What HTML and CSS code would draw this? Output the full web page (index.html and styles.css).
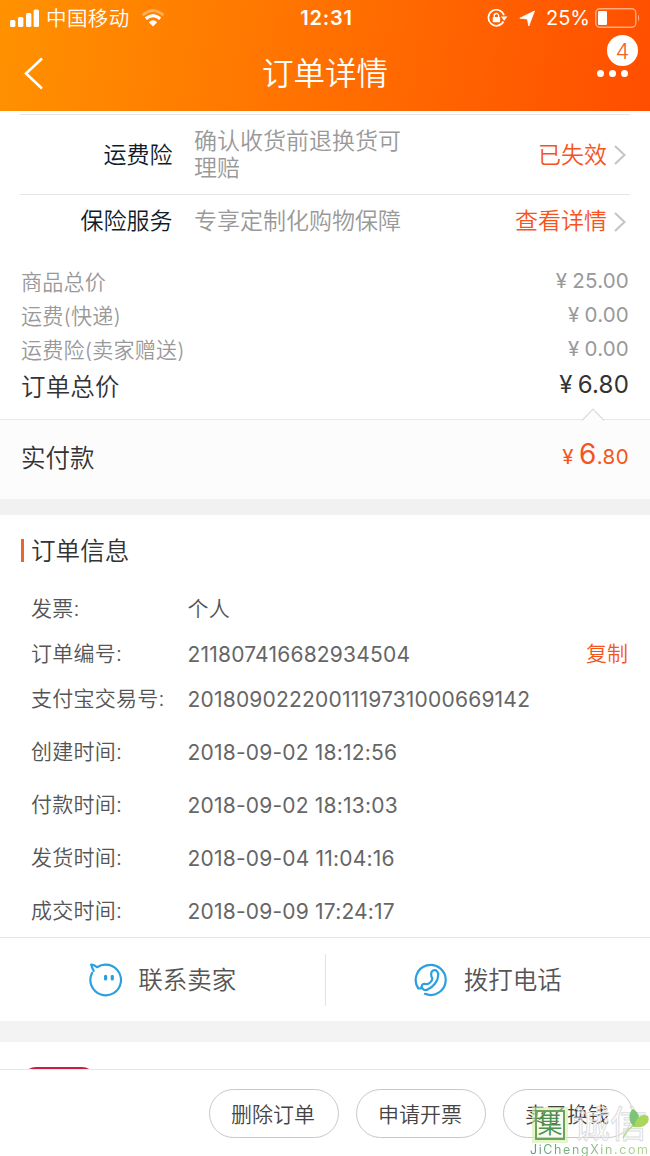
FILE: index.html
```html
<!DOCTYPE html>
<html lang="zh-CN">
<head>
  <meta charset="utf-8">
  <title>订单详情</title>
  <link rel="stylesheet" href="styles.css">
</head>
<body>
<!-- 头部 -->
<header class="header">
  <div class="status-bar">
    <div class="status-left">
      <svg class="signal" width="29" height="18" viewBox="0 0 29 18" fill="#fff">
        <rect x="0" y="11" width="5.4" height="7" rx="1.6"/>
        <rect x="8" y="8" width="5.4" height="10" rx="1.6"/>
        <rect x="16" y="4" width="5.4" height="14" rx="1.6"/>
        <rect x="23.6" y="0.5" width="5.4" height="17.5" rx="1.6"/>
      </svg>
      <span class="carrier">中国移动</span>
      <svg class="wifi" width="24" height="18" viewBox="0 0 24 18" fill="none" stroke="#fff">
        <path d="M1.5 6.2Q12-3 22.5 6.2" stroke-width="2.6" opacity=".35"/>
        <path d="M4.8 9.8Q12 3.5 19.2 9.8" stroke-width="3.2"/>
        <path d="M7.8 13.2Q12 9.5 16.2 13.2L12 17.5Z" fill="#fff" stroke="none"/>
      </svg>
    </div>
    <div class="clock">12:31</div>
    <div class="status-right">
      <svg class="lock" width="21" height="18" viewBox="0 0 21 18" fill="none" stroke="#fff">
        <path d="M16.5 12.5A8 8 0 1 1 17 6.2" stroke-width="1.7"/>
        <path d="M13.8 7.5H20.4L17.2 11.8Z" fill="#fff" stroke="none"/>
        <path d="M7.2 8.5V6.7a2.2 2.2 0 0 1 4.4 0V8.5" stroke-width="1.3"/>
        <rect x="5.7" y="8" width="7.4" height="5.3" rx=".8" fill="#fff" stroke="none"/>
      </svg>
      <svg class="locate" width="16" height="17" viewBox="0 0 16 17" fill="#fff"><path d="M15.5 1L9.8 16L8.4 9L.8 8.2Z" stroke="#fff" stroke-width=".8"/></svg>
      <span class="percent">25%</span>
      <svg class="battery" width="46" height="20" viewBox="0 0 46 20" fill="none">
        <rect x=".8" y=".8" width="40" height="18.4" rx="4" stroke="#fff" stroke-opacity=".5" stroke-width="1.4"/>
        <rect x="3" y="3" width="9" height="14" rx="1" fill="#fff"/>
        <path d="M43 6.5q2.5 3.5 0 7z" fill="#fff" fill-opacity=".5"/>
      </svg>
    </div>
  </div>
  <div class="nav-bar">
    <svg class="back" width="22" height="34" viewBox="0 0 22 34" fill="none" stroke="#fff" stroke-width="2.6"><path d="M19 1.5L3 16.5L19 31.5"/></svg>
    <h1>订单详情</h1>
    <div class="more">
      <i></i><i></i><i></i>
      <span class="badge">4</span>
    </div>
  </div>
</header>

<main class="content">
  <!-- 保险 -->
  <section class="insurance">
    <div class="ins-row ins-first">
      <div class="ins-name">运费险</div>
      <div class="ins-desc">确认收货前退换货可理赔</div>
      <div class="ins-link">已失效</div>
      <svg class="arrow" width="12" height="20" viewBox="0 0 12 20" fill="none" stroke="#c4c4c4" stroke-width="2"><path d="M1 1L10.5 10L1 19"/></svg>
    </div>
    <div class="ins-row ins-second">
      <div class="ins-name">保险服务</div>
      <div class="ins-desc">专享定制化购物保障</div>
      <div class="ins-link">查看详情</div>
      <svg class="arrow" width="12" height="20" viewBox="0 0 12 20" fill="none" stroke="#c4c4c4" stroke-width="2"><path d="M1 1L10.5 10L1 19"/></svg>
    </div>
  </section>

  <!-- 价格 -->
  <section class="price">
    <div class="price-row"><span>商品总价</span><span class="num"><em>¥</em>25.00</span></div>
    <div class="price-row"><span>运费(快递)</span><span class="num"><em>¥</em>0.00</span></div>
    <div class="price-row"><span>运费险(卖家赠送)</span><span class="num"><em>¥</em>0.00</span></div>
    <div class="price-row total"><span>订单总价</span><span class="num"><em>¥</em>6.80</span></div>
  </section>
  <section class="paid">
    <svg class="notch" width="24" height="13" viewBox="0 0 24 13" fill="#fcfcfc" stroke="#dcdcdc" stroke-width="1.2"><path d="M1 12.5L12 1L23 12.5"/></svg>
    <span>实付款</span>
    <span class="pay-num"><em>¥</em><b>6</b>.80</span>
  </section>

  <!-- 订单信息 -->
  <section class="order">
    <h2>订单信息</h2>
    <div class="order-row"><span class="label">发票:</span><span class="value text">个人</span></div>
    <div class="order-row"><span class="label">订单编号:</span><span class="value">211807416682934504</span><a class="copy">复制</a></div>
    <div class="order-row"><span class="label">支付宝交易号:</span><span class="value">2018090222001119731000669142</span></div>
    <div class="order-times">
      <div class="order-row"><span class="label">创建时间:</span><span class="value">2018-09-02 18:12:56</span></div>
      <div class="order-row"><span class="label">付款时间:</span><span class="value">2018-09-02 18:13:03</span></div>
      <div class="order-row"><span class="label">发货时间:</span><span class="value">2018-09-04 11:04:16</span></div>
      <div class="order-row"><span class="label">成交时间:</span><span class="value">2018-09-09 17:24:17</span></div>
    </div>
  </section>

  <!-- 联系 -->
  <section class="contact">
    <div class="contact-item">
      <svg width="34" height="34" viewBox="0 0 34 34" fill="none" stroke="#2b9fe0" stroke-width="2.2" stroke-linecap="round" stroke-linejoin="round">
        <path d="M5.6 7.8Q4 5 3.2 1.5Q6 1.7 9 4.2Q13 1.7 17.5 1.7A15.3 15.3 0 1 1 4.2 9.8"/>
        <path d="M17.6 13.3v2.6M24.3 13.3v2.6" stroke-width="3.2"/>
      </svg>
      <span>联系卖家</span>
    </div>
    <div class="contact-item">
      <svg width="34" height="34" viewBox="0 0 34 34" fill="none" stroke="#2b9fe0" stroke-width="2.2" stroke-linecap="round" stroke-linejoin="round">
        <path d="M4.2 25.2A15 15 0 1 1 11 30.8"/>
        <path d="M4.2 25.2C6.500 26 7.500 25.200 7.600 23.500C8 21 10 20.300 12.300 21.200C14.800 21.500 18.200 18.300 18.400 15.700C17 13 16.200 9 19 7.600C22 6.200 24.500 8.500 24.200 12.500C24 18.500 19 24 14 26.300C11 28 8 26.500 7.600 23.500"/>
      </svg>
      <span>拨打电话</span>
    </div>
  </section>

  <section class="card"><div class="card-logo"></div></section>
</main>

<!-- 底部按钮 -->
<footer class="footer">
  <button>删除订单</button>
  <button>申请开票</button>
  <button>卖了换钱</button>
  <div class="watermark">
    <div class="wm-top">
      <span class="wm-seal">集</span>
      <span class="wm-name">诚信</span>
      <svg class="wm-leaf" width="28" height="30" viewBox="0 0 28 30">
        <path d="M1 29Q6 18 14 16" fill="none" stroke="#b9d98e" stroke-width="1.5"/>
        <path d="M12 18C5 11 7 3 11 0C17 4 19 8 15 18Z" fill="#7cc576"/>
        <path d="M12 18C14 8 20 4 26 7C29 13 22 20 12 18Z" fill="#a9d65c"/>
      </svg>
    </div>
    <div class="wm-url">JiChengXin.com</div>
  </div>
</footer>
</body>
</html>
```
FILE: styles.css
```css
/* 基本样式 */
* { box-sizing: border-box; }
body { margin: 0; height: 1156px; display: flex; flex-direction: column; overflow: hidden; background: #fff; color: #333; font-family: Inter, "Noto Sans CJK SC", sans-serif; font-weight: 350; }
h1, h2 { margin: 0; font-weight: inherit; }
em, i { font-style: normal; }
svg { display: block; flex: none; }

/* 头部 */
.header { height: 111px; flex: none; background: linear-gradient(100deg, #ff9200 0%, #ff7000 50%, #ff4e00 100%); color: #fff; }
.status-bar { height: 36px; display: grid; grid-template-columns: 1fr auto 1fr; align-items: center; padding: 0 10px; }
.status-left, .status-right { display: flex; align-items: center; }
.status-right { justify-content: flex-end; margin-right: -1px; }
.carrier { font-size: 20.5px; margin: -2px 0 0 7px; letter-spacing: .4px; }
.wifi { margin-left: 11px; }
.clock { font-size: 20px; font-weight: 600; letter-spacing: .8px; margin: -1px 0 0 3px; }
.locate { margin-left: 11px; }
.percent { font-size: 20px; font-weight: 400; margin: 0 5px 0 11px; }
.nav-bar { height: 75px; display: flex; justify-content: space-between; align-items: center; padding: 0 22px 0 23px; }
.nav-bar h1 { font-size: 31.5px; line-height: 40px; margin: 0 0 0 8px; }
.more { position: relative; display: flex; gap: 5px; width: 31px; }
.more i { width: 7px; height: 7px; border-radius: 50%; background: #fff; }
.badge { position: absolute; left: 10px; top: -35px; width: 31px; height: 31px; border-radius: 50%; background: #fff; color: #f0622a; font-size: 22px; line-height: 32px; text-align: center; }

/* 保险 */
.content { flex: 1; min-height: 0; overflow: hidden; }
.insurance { padding: 3px 20px 0; height: 155px; }
.ins-row { display: flex; align-items: center; border-top: 1px solid #e6e6e6; font-size: 23px; line-height: 27px; }
.ins-first { height: 80px; padding-top: 1px; }
.ins-second { height: 54px; }
.ins-name { width: 152.5px; text-align: right; color: #0c1c2c; }
.ins-desc { width: 216px; margin-left: 21.5px; color: #999; }
.ins-link { flex: 1; text-align: right; color: #f5541c; }
.arrow { margin: 0 4px 0 7px; }

/* 价格 */
.price { height: 153px; padding: 0 21px; }
.price-row { display: flex; justify-content: space-between; height: 34px; line-height: 34px; font-size: 21.1px; color: #999; }
.price-row span:first-child { letter-spacing: .15px; }
.price-row .num { margin-top: -2px; font-size: 20.5px; font-weight: 400; letter-spacing: .2px; }
.num em, .pay-num em { margin-right: 5px; }
.price-row.total { height: 38px; line-height: 38px; font-size: 24.5px; color: #333; }
.total .num { font-size: 24px; }
.paid { position: relative; display: flex; justify-content: space-between; align-items: center; height: 96px; padding: 0 21px 7px; background: #fcfcfc; border-top: 1px solid #e8e8e8; border-bottom: 16px solid #f1f1f1; font-size: 24.5px; }
.notch { position: absolute; right: 45px; top: -12px; }
.pay-num { margin-top: -4px; color: #f5541c; font-size: 20.5px; font-weight: 400; letter-spacing: .4px; }
.pay-num b { font-size: 28px; font-weight: 400; }

/* 订单信息 */
.order { height: 422px; padding: 24px 21px 0; }
.order h2 { border-left: 3px solid #e8682c; padding-left: 7px; height: 23px; line-height: 24px; font-size: 24.6px; margin-bottom: 24px; }
.order-row { display: flex; align-items: center; height: 45px; padding-left: 10px; font-size: 21px; color: #555; }
.order-times { padding-top: 4px; }
.order-times .order-row { height: 53px; }
.label { width: 156.5px; margin-top: -3px; white-space: nowrap; letter-spacing: .25px; }
.value { flex: 1; margin-top: 1px; font-weight: 400; letter-spacing: .2px; color: #666; }
.value.text { margin-top: -3px; font-weight: 350; color: #555; }
.copy { margin: -3px 1px 0 0; color: #f5541c; }

/* 联系 */
.contact { display: flex; height: 84px; border-top: 1px solid #e6e6e6; align-items: center; }
.contact-item { flex: 1; display: flex; align-items: center; justify-content: center; gap: 16px; height: 52px; font-size: 24.5px; color: #555; }
.contact-item span { margin-top: -2px; }
.contact-item + .contact-item { border-left: 1px solid #e2e2e2; }
.card { border-top: 21px solid #f3f3f3; padding: 25px 22px; }
.card-logo { width: 74px; height: 40px; border-radius: 14px; background: #c8203f; }

/* 底部 */
.footer { position: relative; flex: none; display: flex; justify-content: flex-end; gap: 17px; height: 87px; padding: 19px 17.5px 0; border-top: 1px solid #e6e6e6; background: #fff; }
.footer button { width: 130px; height: 49px; padding: 0 1px 2px 0; border: 1px solid #c8c8c8; border-radius: 25px; background: #fff; color: #444; font-family: inherit; font-weight: 350; font-size: 21px; }
.watermark { position: absolute; left: 530px; top: 37px; width: 120px; }
.wm-top { display: flex; align-items: center; height: 35px; }
.wm-seal { width: 30px; height: 30px; margin-left: 5px; border: 2px solid #6aa35c; outline: 3px solid rgba(214, 240, 170, .6); background: rgba(214, 240, 170, .2); color: #4d9150; font-size: 25px; line-height: 25px; text-align: center; }
.wm-name { margin-left: 8px; font-size: 37px; line-height: 35px; font-weight: 400; color: rgba(255, 255, 255, .3); -webkit-text-stroke: 1px #ddd; }
.wm-leaf { position: absolute; left: 92px; top: 2px; }
.wm-url { font-size: 12.5px; line-height: 15px; letter-spacing: 1.6px; font-weight: 400; white-space: nowrap; background: linear-gradient(90deg, #5d9c7a, #b5d98c); -webkit-background-clip: text; color: transparent; }
```
